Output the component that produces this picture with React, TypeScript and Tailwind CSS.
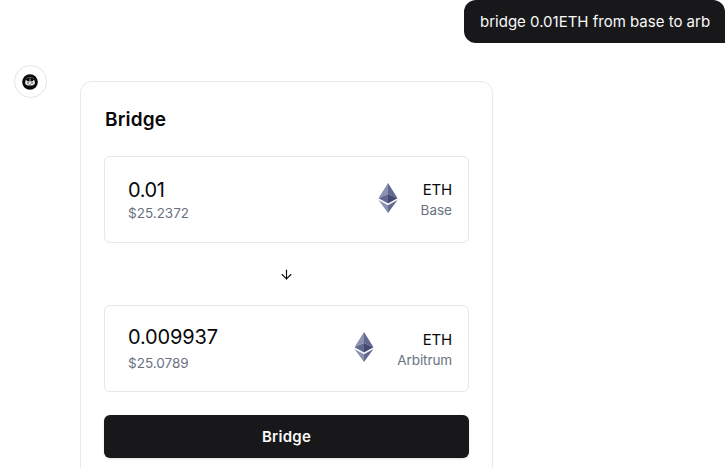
import { ArrowDown } from "lucide-react";

function EthLogo() {
  return (
    <svg width="20" height="32" viewBox="0 0 20 32" className="shrink-0">
      <path d="M10 1L0.5 16.3L10 12Z" fill="#8a92b2" />
      <path d="M10 1V12L19.5 16.3Z" fill="#62688f" />
      <path d="M10 12L0.5 16.3L10 21.5Z" fill="#62688f" />
      <path d="M10 12L19.5 16.3L10 21.5Z" fill="#454a75" />
      <path d="M0.5 18L10 31V23.3Z" fill="#8a92b2" />
      <path d="M19.5 18L10 31V23.3Z" fill="#62688f" />
    </svg>
  );
}

function BotAvatar() {
  return (
    <div className="mt-[65px] flex size-[33px] shrink-0 items-center justify-center rounded-full border border-[#e4e4e7] pr-px">
      <svg width="16" height="16" viewBox="0 0 16 16">
        <circle cx="8" cy="8" r="7.8" fill="#09090b" />
        <path d="M4 5C5 3.6 6.5 3.4 8 3.4S11 3.6 12 5" fill="none" stroke="#777" strokeWidth="0.7" />
        <path d="M3.8 5.4L5.5 7.2H10.5L12.2 5.4L13 9C12.6 10.9 11 11.6 8 11.6S3.4 10.9 3 9Z" fill="#e4e4e7" />
        <path d="M7.4 4.5H8.6V7.4H7.4Z" fill="#999" />
        <circle cx="6" cy="9" r="0.65" fill="#09090b" />
        <circle cx="10" cy="9" r="0.65" fill="#09090b" />
        <path d="M7 10.6H9" stroke="#777" strokeWidth="0.6" />
      </svg>
    </div>
  );
}

export default function App() {
  return (
    <main className="h-[468px] overflow-hidden bg-white font-['Inter',sans-serif] text-[#09090b]">
      <div className="flex h-[468px] items-start pl-[14px]">
        <BotAvatar />

        <section className="mt-[81px] ml-[33px] h-[420px] w-[413px] shrink-0 rounded-xl border border-[#e9e9eb] px-[23px] pt-[24px]">
          <h1 className="pl-px text-[19px] leading-7 font-semibold tracking-[0.15px]">Bridge</h1>

          <div className="mt-[22px] flex h-[87px] items-center justify-between rounded-md border border-[#e7e7ea] pr-4 pl-[23px]">
            <div className="pt-[2px]">
              <p className="text-[20px] leading-6 tracking-[-0.45px]">0.01</p>
              <p className="pt-px text-[13.5px] leading-[21px] text-gray-500">$25.2372</p>
            </div>
            <div className="flex items-center gap-[23px] pb-[2px]">
              <div className="pb-[2px]">
                <EthLogo />
              </div>
              <div className="pt-[3px] text-right">
                <p className="text-[15px] leading-[21px] tracking-[-0.2px]">ETH</p>
                <p className="text-[13.5px] leading-[21px] text-gray-500">Base</p>
              </div>
            </div>
          </div>

          <div className="flex h-[62px] items-center justify-center pr-px">
            <ArrowDown size={15} strokeWidth={1.8} />
          </div>

          <div className="flex h-[87px] items-center justify-between rounded-md border border-[#e7e7ea] pr-4 pl-[23px]">
            <div className="pt-[2px]">
              <p className="text-[20px] leading-[27px] tracking-[-0.15px]">0.009937</p>
              <p className="text-[13.5px] leading-[24px] text-gray-500">$25.0789</p>
            </div>
            <div className="flex items-center gap-[23px] pb-[2px]">
              <div className="pb-px">
                <EthLogo />
              </div>
              <div className="pt-[4px] text-right">
                <p className="text-[15px] leading-[21px] tracking-[-0.2px]">ETH</p>
                <p className="text-[13.5px] leading-[21px] tracking-[-0.1px] text-gray-500">Arbitrum</p>
              </div>
            </div>
          </div>

          <button className="mt-[23px] h-[43px] w-full rounded-md bg-[#18181b] pt-[2px] text-[15px] font-semibold tracking-[0.25px] text-[#fafafa] shadow">
            Bridge
          </button>
        </section>

        <div className="-ml-[29px] flex h-[43px] w-[261px] shrink-0 items-center rounded-xl rounded-br-none bg-[#18181b] pt-[2px] pl-4 text-[15px] whitespace-nowrap text-[#fafafa]">
          bridge 0.01ETH from base to arb
        </div>
      </div>
    </main>
  );
}
